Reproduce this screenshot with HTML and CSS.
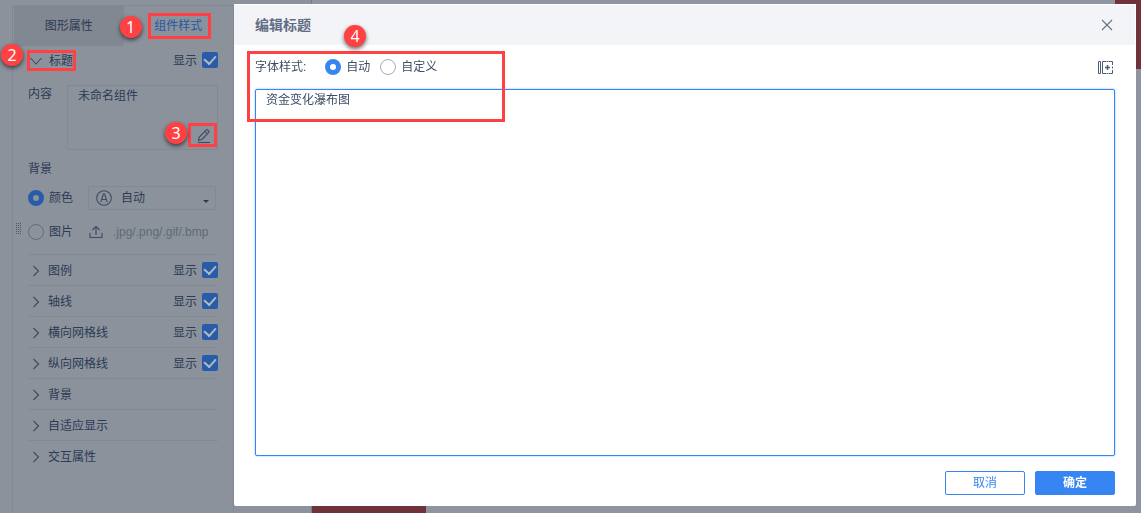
FILE: index.html
```html
<!DOCTYPE html>
<html lang="zh-CN">
<head>
<meta charset="utf-8">
<title>编辑标题</title>
<link rel="stylesheet" href="styles.css">
</head>
<body>
<div class="app">
  <aside class="panel">
    <svg class="grip" width="5" height="14" viewBox="0 0 5 14" aria-hidden="true"><path d="M.5 1v12M2.500 1v12M4.500 1v12" stroke="#4b5468" stroke-dasharray="1 1"/></svg>
    <nav class="tabs">
      <button class="tab" type="button">图形属性</button>
      <button class="tab tab-active" type="button">组件样式<span class="frame frame-tab"></span><span class="badge badge-tab">1</span></button>
    </nav>
    <div class="settings">
      <div class="row row-title">
        <button class="toggle" type="button"><svg class="chevron" viewBox="0 0 12 12"><path d="M0.5 3l5.5 6 5.500-6"/></svg>标题<span class="frame frame-title"></span><span class="badge badge-title">2</span></button>
        <label class="show">显示<input class="check" type="checkbox" checked></label>
      </div>
      <div class="content">
        <label for="content-text">内容</label>
        <div class="content-box">
          <textarea class="content-text" id="content-text" readonly>未命名组件</textarea>
          <button class="edit" type="button" aria-label="编辑"><svg width="14" height="16" viewBox="0 0 14 16"><path d="M1.500 12.500l.8-3.500 7-7.200q.6-.5 1.200 0l1.300 1.300q.5.600 0 1.200l-7 7.200zM8 3.300l2.500 2.500"/><path d="M1 14.500h12"/></svg><span class="frame frame-edit"></span><span class="badge badge-edit">3</span></button>
        </div>
      </div>
      <div class="subhead">背景</div>
      <div class="bg-row">
        <label class="choice"><input class="radio" type="radio" name="bg" checked>颜色</label>
        <div class="picker">
          <svg class="auto-icon" width="16" height="16" viewBox="0 0 16 16"><path d="M15.3 8A7.3 7.3 0 1 1 .7 8a7.3 7.3 0 0 1 14.6 0zM4.8 12.2L7.4 4h1.2l2.6 8.2M5.8 9.500h4.400"/></svg>
          <select class="select" aria-label="颜色"><option>自动</option></select>
          <svg class="caret" width="6" height="3" viewBox="0 0 6 3"><path d="M0 0h6L3 3z"/></svg>
        </div>
      </div>
      <div class="bg-row bg-row-image">
        <label class="choice"><input class="radio" type="radio" name="bg">图片</label>
        <button class="upload" type="button"><svg width="14" height="14" viewBox="0 0 14 14"><path d="M1 8v4.500h12V8M7 10V1.500M3.500 5L7 1.500 10.500 5"/></svg>.jpg/.png/.gif/.bmp</button>
      </div>
      <div class="row"><button class="toggle" type="button"><svg class="chevron" viewBox="0 0 12 12"><path d="M3.500 1L8.500 6l-5 5"/></svg>图例</button><label class="show">显示<input class="check" type="checkbox" checked></label></div>
      <div class="row"><button class="toggle" type="button"><svg class="chevron" viewBox="0 0 12 12"><path d="M3.500 1L8.500 6l-5 5"/></svg>轴线</button><label class="show">显示<input class="check" type="checkbox" checked></label></div>
      <div class="row"><button class="toggle" type="button"><svg class="chevron" viewBox="0 0 12 12"><path d="M3.500 1L8.500 6l-5 5"/></svg>横向网格线</button><label class="show">显示<input class="check" type="checkbox" checked></label></div>
      <div class="row"><button class="toggle" type="button"><svg class="chevron" viewBox="0 0 12 12"><path d="M3.500 1L8.500 6l-5 5"/></svg>纵向网格线</button><label class="show">显示<input class="check" type="checkbox" checked></label></div>
      <div class="row"><button class="toggle" type="button"><svg class="chevron" viewBox="0 0 12 12"><path d="M3.500 1L8.500 6l-5 5"/></svg>背景</button></div>
      <div class="row"><button class="toggle" type="button"><svg class="chevron" viewBox="0 0 12 12"><path d="M3.500 1L8.500 6l-5 5"/></svg>自适应显示</button></div>
      <div class="row"><button class="toggle" type="button"><svg class="chevron" viewBox="0 0 12 12"><path d="M3.500 1L8.500 6l-5 5"/></svg>交互属性</button></div>
    </div>
  </aside>
  <main class="chart">
    <div class="bar bar-first"></div>
    <div class="bar bar-last"></div>
  </main>
</div>
<section class="dialog" role="dialog" aria-labelledby="dialog-title">
  <header class="dialog-head">
    <h1 class="dialog-title" id="dialog-title">编辑标题</h1>
    <button class="close" type="button" aria-label="关闭"><svg width="12" height="12" viewBox="0 0 12 12"><path d="M1 1l10 10M11 1L1 11"/></svg></button>
  </header>
  <div class="dialog-body">
    <div class="style-bar">
      <span class="style-label">字体样式:</span>
      <label class="choice"><input class="radio" type="radio" name="font" checked>自动</label>
      <label class="choice"><input class="radio" type="radio" name="font">自定义</label>
      <button class="insert" type="button" aria-label="插入字段"><svg width="15" height="13" viewBox="0 0 15 13"><path d="M.5.5h2v12h-2z"/><path d="M8 .5H4.500v12H8M11 .5h3.500V4M14.500 9v3.500H11M8.500 .5h2M8.500 12.500h2M14.500 5.500v2"/><path d="M9.500 4v5M7 6.500h5" stroke-width="1.500"/></svg></button>
    </div>
    <textarea class="editor" aria-label="标题内容">资金变化瀑布图</textarea>
    <span class="frame frame-font"></span>
    <footer class="actions">
      <button class="btn" type="button">取消</button>
      <button class="btn btn-primary" type="button">确定</button>
    </footer>
  </div>
  <span class="badge badge-font">4</span>
</section>
</body>
</html>
```

FILE: styles.css
```css
* { box-sizing: border-box; }
body {
  margin: 0;
  background: #8b929c;
  color: #2c3a54;
  font: 12px/18px "Liberation Sans", "Noto Sans CJK SC", sans-serif;
}
button, select, textarea { font: inherit; color: inherit; }
button { padding: 0; border: 0; background: none; }
input { margin: 0; }
svg { display: block; flex: none; fill: none; stroke: #3f4a62; stroke-width: 1.1; }

.app { display: flex; height: 100vh; padding-top: 5px; overflow: hidden; }
.panel {
  position: relative;
  flex: none;
  width: 222px;
  margin-left: 12px;
  border: 1px solid #828993;
  border-bottom: 0;
}
.grip { position: absolute; left: 3px; top: 216px; stroke-width: 1; }
.tabs { display: flex; height: 40px; padding-left: 1px; }
.tab { position: relative; flex: 1; background: #828891; }
.tab-active { background: none; color: #2459a6; }

.settings { padding: 0 15px; }
.row {
  display: flex;
  align-items: center;
  justify-content: space-between;
  height: 31px;
  padding-top: 1px;
  border-top: 1px solid #828993;
}
.row-title { height: 29px; padding-top: 0; border-top: 0; }
.toggle { position: relative; display: flex; align-items: center; gap: 8px; }
.chevron { width: 12px; height: 14px; margin-left: 2px; margin-right: -2px; }
.row-title .chevron { margin-right: -1px; }
.show { display: flex; align-items: center; gap: 5px; }
.check {
  appearance: none;
  display: grid;
  place-items: center;
  width: 16px;
  height: 16px;
  border-radius: 2px;
  background: #285ca8;
}
.check:checked::before {
  content: "";
  width: 6px;
  height: 9px;
  margin-bottom: 3px;
  border: solid #b3b9c3;
  border-width: 0 2px 2px 0;
  transform: rotate(42deg);
}
.row .check { margin-bottom: 1px; }
.content { display: flex; gap: 15px; margin-top: 10px; }
.content-box { position: relative; flex: 1; height: 65px; border: 1px solid #828993; }
.content-text {
  display: block;
  width: 100%;
  height: 100%;
  padding: 1px 10px;
  border: 0;
  outline: 0;
  resize: none;
  background: none;
}
.edit { position: absolute; right: 6px; bottom: 5px; }
.subhead { margin: 10px 0 8px; }
.bg-row { display: flex; align-items: center; gap: 15px; height: 24px; margin-right: 2px; }
.bg-row-image { margin: 10px 0 10px; }
.choice { display: flex; align-items: center; gap: 5px; }
.radio {
  appearance: none;
  width: 16px;
  height: 16px;
  border: 1px solid #626b7c;
  border-radius: 50%;
}
.radio:checked { border: 5px solid #285ca8; }
.picker { position: relative; flex: 1; height: 24px; border: 1px solid #828993; }
.auto-icon { position: absolute; left: 7px; top: 3px; }
.select {
  appearance: none;
  width: 100%;
  height: 100%;
  padding: 0 32px;
  border: 0;
  outline: 0;
  background: none;
}
.caret { position: absolute; right: 6px; top: 13px; }
.caret path { fill: #2c3a54; stroke: none; }
.upload { display: flex; align-items: center; gap: 10px; margin-left: 1px; color: #606978; }

.chart {
  display: flex;
  flex: 1;
  justify-content: space-between;
  margin-top: -5px;
  margin-left: 77px;
  border-left: 1px solid #757c87;
  background: #8f959f;
}
.bar { background: #70323a; }
.bar-first { align-self: flex-end; width: 114px; height: 7px; }
.bar-last { width: 26px; height: 69px; }

.dialog {
  position: fixed;
  inset: 4px 5px 7px 234px;
  display: flex;
  flex-direction: column;
  border-radius: 2px;
  background: #fff;
  color: #3d4d66;
}
.dialog-head {
  display: flex;
  align-items: center;
  justify-content: space-between;
  height: 41px;
  padding: 0 22px 0 21px;
  border: 1px solid #fff;
  border-width: 1px 1px 0 0;
  background: #f2f4f8;
}
.dialog-title { margin: 0; color: #606c82; font-size: 14px; line-height: 20px; }
.close svg { stroke: #657187; }
.dialog-body {
  position: relative;
  flex: 1;
  display: flex;
  flex-direction: column;
  padding: 10px 21px 11px;
}
.style-bar { display: flex; align-items: center; gap: 10px; height: 24px; }
.style-label { margin-right: 9px; }
.dialog .radio { border-color: #a3abb8; }
.dialog .radio:checked { border-color: #3685f2; }
.insert { margin-left: auto; margin-right: 2px; }
.insert svg { stroke: #4f5c75; stroke-width: 1; }
.editor {
  flex: 1;
  margin: 10px 0 15px;
  padding: 1px 10px;
  border: 1px solid #3685f2;
  border-radius: 2px;
  outline: 0;
  resize: none;
  box-shadow: 0 0 2px #79adf6;
}
.actions { display: flex; justify-content: flex-end; gap: 10px; }
.btn {
  width: 80px;
  height: 24px;
  border: 1px solid #3685f2;
  border-radius: 2px;
  color: #3685f2;
}
.btn-primary { background: #3685f2; color: #fff; font-weight: bold; }

.frame { position: absolute; border: 3px solid #ff4143; pointer-events: none; }
.frame-tab { inset: 7px 22px 7px 24px; }
.frame-title { inset: -2px -3px -1px -1px; }
.frame-edit { inset: -5px -6px -3px -9px; }
.frame-font { left: 13px; top: 6px; width: 258px; height: 71px; }
.badge {
  position: absolute;
  width: 22px;
  height: 22px;
  border-radius: 50%;
  background: #ff4143;
  box-shadow: 0 2px 4px rgba(0, 0, 0, .6);
  color: #fff;
  font: 16px/22px "Noto Sans", sans-serif;
  text-align: center;
}
.badge-tab { left: -4px; top: 10px; }
.badge-title { left: -27px; top: -8px; }
.badge-edit { left: -32px; top: -6px; }
.badge-font { left: 110px; top: 21px; }
```
